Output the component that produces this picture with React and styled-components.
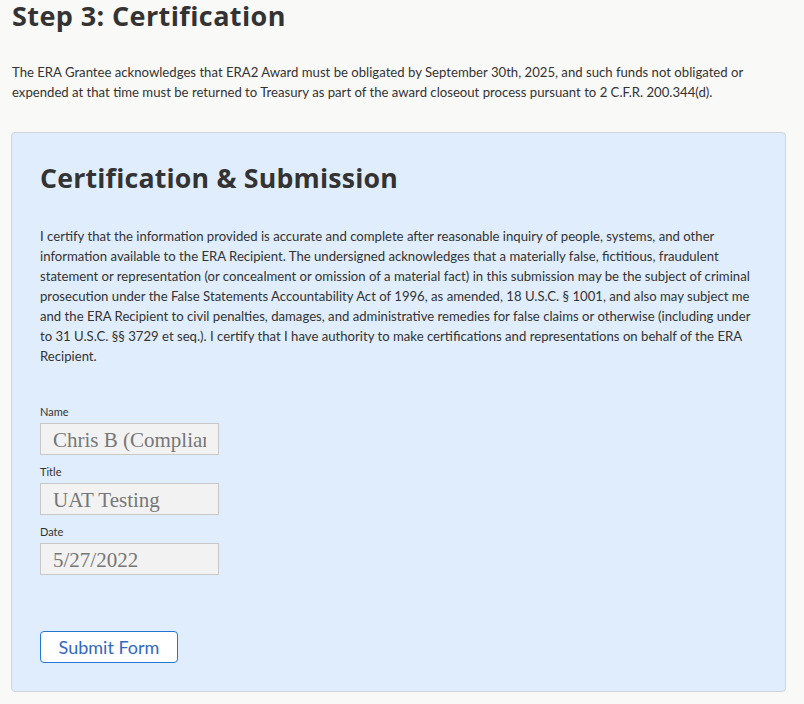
import React from 'react';
import styled, { createGlobalStyle } from 'styled-components';

const GlobalStyle = createGlobalStyle`
  html, body {
    margin: 0;
    padding: 0;
    background: #f9f9f8;
  }
  body {
    font-family: Lato, "Open Sans", sans-serif;
    color: #333;
  }
`;

const Page = styled.div`
  padding: 0 18px 0 11px;
`;

const StepHeading = styled.h1`
  margin: 0;
  padding: 1px 0 0 1px;
  font-family: "Open Sans", "DejaVu Sans", sans-serif;
  font-weight: 700;
  font-size: 27px;
  line-height: 30px;
  color: #333;
  letter-spacing: 0.4px;
`;

const Intro = styled.p`
  margin: 31px 0 0 1px;
  font-size: 13.15px;
  line-height: 20px;
  color: #333;
`;

const Card = styled.section`
  margin-top: 30px;
  background: #e0edfd;
  border: 1px solid #cfd6de;
  border-radius: 4px;
  padding: 27px 28px 28px 28px;
`;

const CardHeading = styled.h2`
  margin: 0;
  font-family: "Open Sans", "DejaVu Sans", sans-serif;
  font-weight: 700;
  font-size: 26.7px;
  line-height: 36px;
  color: #333;
  letter-spacing: 0.2px;
`;

const Statement = styled.p`
  margin: 30px 0 0 0;
  font-size: 13.15px;
  line-height: 20px;
  color: #333;
`;

const Fields = styled.div`
  margin-top: 40px;
  display: flex;
  flex-direction: column;
  gap: 11px;
`;

const Field = styled.label`
  display: flex;
  flex-direction: column;
  gap: 5px;
`;

const FieldLabel = styled.span`
  font-size: 11px;
  line-height: 12px;
  color: #333;
`;

const Input = styled.input`
  box-sizing: border-box;
  width: 179px;
  height: 32px;
  margin: 0;
  padding: 2px 12px 0 12px;
  background: #f2f2f2;
  border: 1px solid #c8c8c8;
  font-family: "Liberation Serif", "Times New Roman", serif;
  font-size: 21px;
  color: #777;
  outline: none;
`;

const SubmitButton = styled.button`
  margin-top: 56px;
  box-sizing: border-box;
  width: 138px;
  height: 32px;
  background: #fff;
  border: 1px solid #2576d2;
  border-radius: 4px;
  font-family: Lato, "Open Sans", sans-serif;
  font-size: 18px;
  color: #3168c0;
  cursor: pointer;
`;

const fields = [
  { label: 'Name', value: 'Chris B (Compliance)' },
  { label: 'Title', value: 'UAT Testing' },
  { label: 'Date', value: '5/27/2022' },
];

export default function App() {
  return (
    <>
      <GlobalStyle />
      <Page>
        <StepHeading>Step 3: Certification</StepHeading>
        <Intro>
          The ERA Grantee acknowledges that ERA2 Award must be obligated by September 30th, 2025, and such funds not obligated or
          expended at that time must be returned to Treasury as part of the award closeout process pursuant to 2 C.F.R. 200.344(d).
        </Intro>
        <Card>
          <CardHeading>Certification &amp; Submission</CardHeading>
          <Statement>
            I certify that the information provided is accurate and complete after reasonable inquiry of people, systems, and other
            information available to the ERA Recipient. The undersigned acknowledges that a materially false, fictitious, fraudulent
            statement or representation (or concealment or omission of a material fact) in this submission may be the subject of criminal
            prosecution under the False Statements Accountability Act of 1996, as amended, 18 U.S.C. § 1001, and also may subject me
            and the ERA Recipient to civil penalties, damages, and administrative remedies for false claims or otherwise (including under
            to 31 U.S.C. §§ 3729 et seq.). I certify that I have authority to make certifications and representations on behalf of the ERA
            Recipient.
          </Statement>
          <Fields>
            {fields.map((f) => (
              <Field key={f.label}>
                <FieldLabel>{f.label}</FieldLabel>
                <Input type="text" value={f.value} readOnly disabled />
              </Field>
            ))}
          </Fields>
          <SubmitButton type="button">Submit Form</SubmitButton>
        </Card>
      </Page>
    </>
  );
}
